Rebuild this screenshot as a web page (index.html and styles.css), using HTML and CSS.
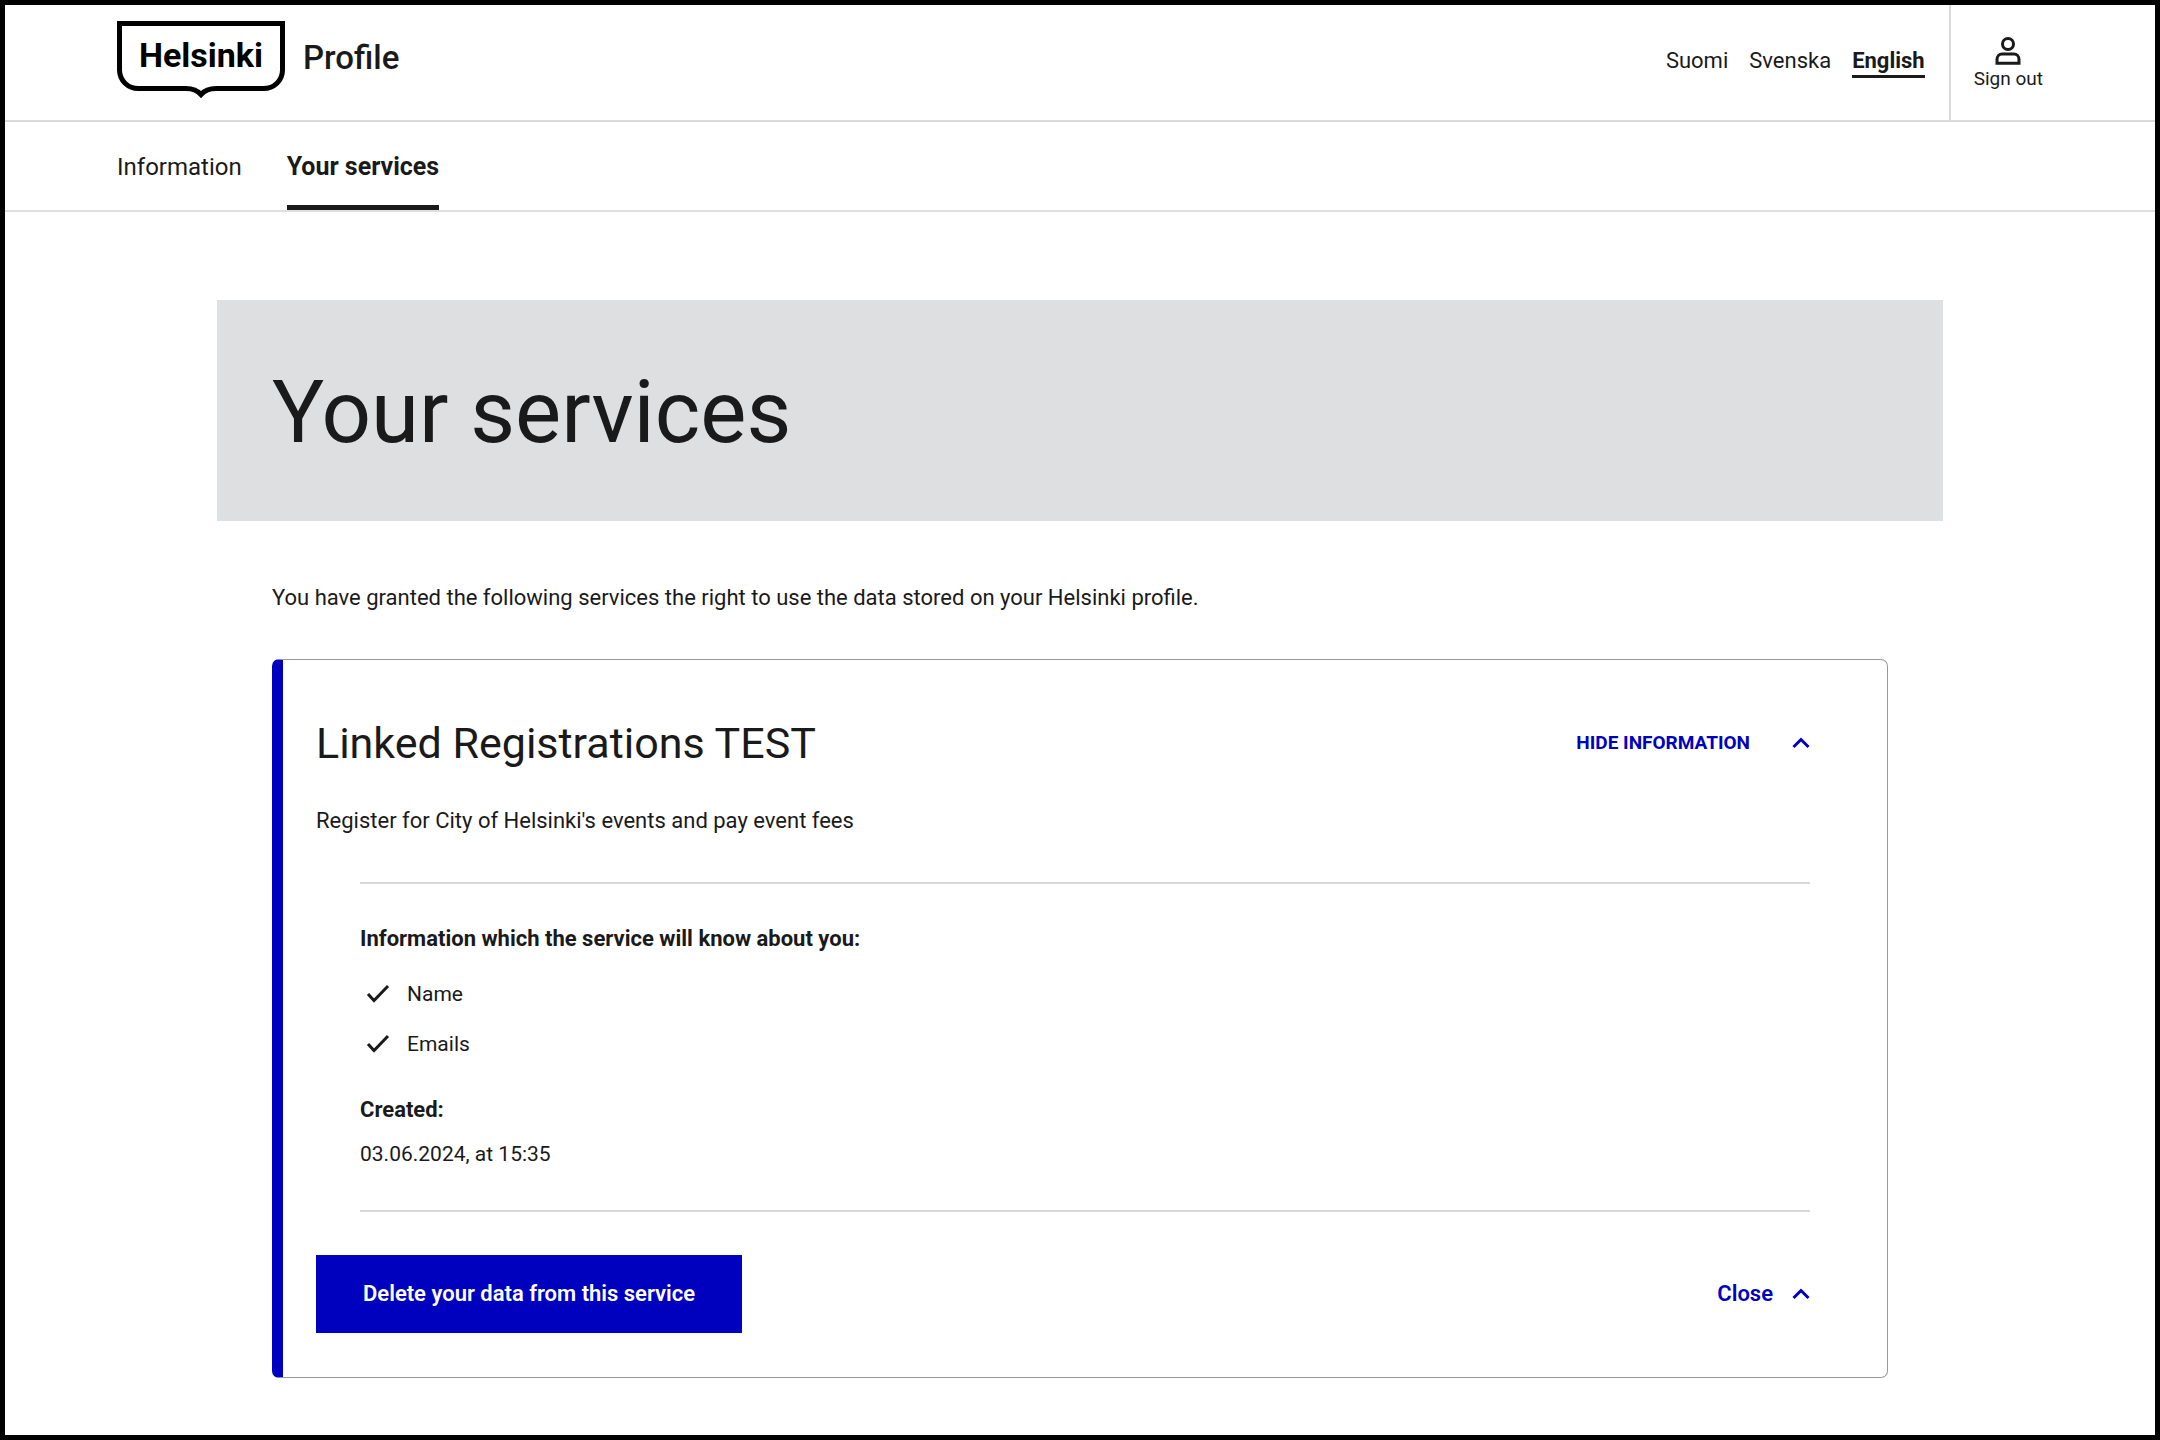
FILE: index.html
```html
<!DOCTYPE html>
<html lang="en">
<head>
<meta charset="utf-8">
<meta name="viewport" content="width=device-width, initial-scale=1">
<title>Your services - Helsinki Profile</title>
<link rel="stylesheet" href="styles.css">
</head>
<body>
<header class="header">
  <a class="brand" href="#">
    <svg class="logo" viewBox="0 0 168 78" role="img" aria-label="Helsinki">
      <path d="M2.5 2.5H165.5V49C165.5 59.500 157 67.500 146.500 67.500H99C92.500 67.500 87.500 69.500 84 73.500C80.500 69.500 75.500 67.500 69 67.500H21.500C11 67.500 2.500 59.500 2.500 49Z" fill="none" stroke="#000" stroke-width="5"/>
      <text class="logo-text" x="84" y="46" text-anchor="middle">Helsinki</text>
    </svg>
    <span class="brand-name">Profile</span>
  </a>
  <div class="actions">
    <nav class="languages" aria-label="Language">
      <a class="language" href="#" lang="fi">Suomi</a>
      <a class="language" href="#" lang="sv">Svenska</a>
      <a class="language language-active" href="#" aria-current="true">English</a>
    </nav>
    <button class="sign-out" type="button">
      <svg class="user-icon" viewBox="0 0 26 28" fill="none" stroke="currentColor" stroke-width="3" aria-hidden="true">
        <circle cx="13" cy="7" r="5.500"/>
        <path d="M2 26.200V22.500C2 19.500 4 17 7 17H19C22 17 24 19.500 24 22.500V26.200Z"/>
      </svg>
      <span>Sign out</span>
    </button>
  </div>
</header>
<nav class="tabs" aria-label="Main">
  <a class="tab" href="#">Information</a>
  <a class="tab tab-active" href="#" aria-current="page">Your services</a>
</nav>
<main class="main">
  <div class="hero"><h1 class="title">Your services</h1></div>
  <div class="content">
    <p class="intro">You have granted the following services the right to use the data stored on your Helsinki profile.</p>
    <section class="card">
      <div class="row">
        <h2 class="card-title">Linked Registrations TEST</h2>
        <button class="toggle toggle-top" type="button" aria-expanded="true">
          <span>HIDE INFORMATION</span>
          <svg class="chevron" viewBox="0 0 18 12" aria-hidden="true"><path d="M1.500 10L9 2.500L16.500 10"/></svg>
        </button>
      </div>
      <p class="description">Register for City of Helsinki's events and pay event fees</p>
      <div class="details">
        <h3 class="label">Information which the service will know about you:</h3>
        <ul class="list">
          <li class="item"><svg class="check" viewBox="0 0 34 34" aria-hidden="true"><path d="M8 17L14 23.500L28 9"/></svg>Name</li>
          <li class="item"><svg class="check" viewBox="0 0 34 34" aria-hidden="true"><path d="M8 17L14 23.500L28 9"/></svg>Emails</li>
        </ul>
        <h3 class="label">Created:</h3>
        <p class="date">03.06.2024, at 15:35</p>
      </div>
      <div class="row">
        <button class="delete" type="button">Delete your data from this service</button>
        <button class="toggle" type="button">
          <span>Close</span>
          <svg class="chevron" viewBox="0 0 18 12" aria-hidden="true"><path d="M1.500 10L9 2.500L16.500 10"/></svg>
        </button>
      </div>
    </section>
  </div>
</main>
</body>
</html>
```
FILE: styles.css
```css
* { box-sizing: border-box; }

body {
  margin: 0;
  min-height: 100vh;
  border: 5px solid #000;
  background: #fff;
  color: #1a1a1a;
  font: 22px/34px Roboto, "Liberation Sans", sans-serif;
}

h1, h2, h3, p, ul { margin: 0; padding: 0; font-size: inherit; font-weight: 400; }
a { color: inherit; text-decoration: none; }
button { border: 0; padding: 0; background: none; color: inherit; font: inherit; cursor: pointer; }

.header {
  display: flex;
  justify-content: space-between;
  padding: 0 112px;
  border-bottom: 2px solid #d9d9d9;
}

.brand { display: flex; gap: 18px; padding-top: 16px; }
.logo { width: 168px; height: 78px; }
.logo-text { font-size: 34px; font-weight: 700; fill: #000; }
.brand-name { padding-top: 17px; font-size: 33px; line-height: 40px; font-weight: 500; }

.actions { display: flex; }
.languages { display: flex; align-items: flex-start; gap: 21px; padding: 42px 24px 0 0; }
.language { line-height: 28px; border-bottom: 3px solid transparent; }
.language-active { font-weight: 700; border-color: #1a1a1a; }

.sign-out {
  display: flex;
  flex-direction: column;
  align-items: center;
  padding: 32px 0 27px 23px;
  border-left: 2px solid #d9d9d9;
  font-size: 19px;
  line-height: 28px;
}
.user-icon { width: 26px; height: 28px; }

.tabs {
  display: flex;
  gap: 45px;
  padding: 0 112px;
  border-bottom: 2px solid #dedede;
  font-size: 24px;
}
.tab { padding: 28px 0 21px; border-bottom: 5px solid transparent; }
.tab-active { font-size: 25px; font-weight: 700; border-color: #1a1a1a; }

.main { max-width: 1726px; margin: 0 auto; padding: 88px 0 56px; }
.hero { padding: 58px 55px 54px; background: #dedfe1; }
.title { font-size: 87px; line-height: 109px; }
.content { padding: 60px 55px 0; }

.card {
  margin-top: 44px;
  padding: 56px 77px 44px 33px;
  border: 1px solid #999;
  border-left: 11px solid #0000bf;
  border-radius: 7px;
}
.row { display: flex; align-items: center; justify-content: space-between; }
.card-title { font-size: 43px; line-height: 54px; }
.description { margin-top: 34px; }

.toggle { display: flex; align-items: center; gap: 19px; color: #0000bf; font-weight: 600; }
.toggle-top { gap: 42px; font-size: 19px; font-weight: 700; }
.chevron { width: 18px; height: 12px; fill: none; stroke: currentColor; stroke-width: 3; }

.details {
  margin: 44px 0 43px 44px;
  padding: 38px 0 39px;
  border: solid #d9d9d9;
  border-width: 2px 0;
}
.label { font-weight: 700; }
.list { margin: 13px 0 24px; list-style: none; font-size: 21px; }
.item { display: flex; align-items: center; gap: 13px; line-height: 50px; }
.check { width: 34px; height: 34px; fill: none; stroke: currentColor; stroke-width: 3; }
.date { margin-top: 10px; font-size: 21px; }

.delete { padding: 22px 47px; background: #0000bf; color: #fff; font-weight: 600; }
```
